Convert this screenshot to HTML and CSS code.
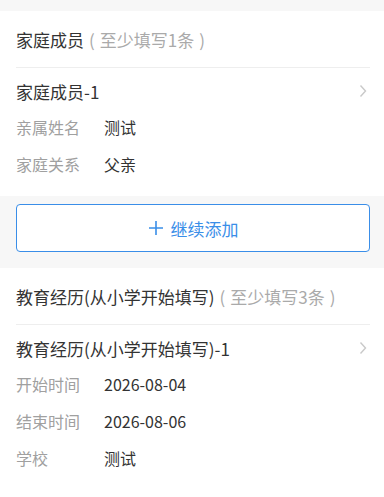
FILE: index.html
```html
<!DOCTYPE html>
<html lang="zh-CN">
<head>
    <meta charset="UTF-8">
    <meta name="viewport" content="width=device-width, initial-scale=1.0">
    <title>信息填写</title>
    <link rel="stylesheet" href="styles.css">
</head>
<body>

    <div class="band-top"></div>

    <div class="section">
        <div class="section-head">家庭成员<span class="hint"><span class="paren">(</span>至少填写1条<span class="paren">)</span></span></div>
        <div class="item">
            <div class="item-title">
                <span>家庭成员-1</span>
                <svg class="chevron" width="8" height="14" viewBox="0 0 8 14"><path d="M1.5 1.5 L6.5 7 L1.5 12.5" fill="none" stroke="#c9c9c9" stroke-width="1.4"/></svg>
            </div>
            <div class="row"><span class="label">亲属姓名</span><span class="value">测试</span></div>
            <div class="row"><span class="label">家庭关系</span><span class="value">父亲</span></div>
        </div>
    </div>

    <div class="band">
        <button class="add-btn">
            <svg width="16" height="16" viewBox="0 0 16 16"><path d="M8 1 V15 M1 8 H15" stroke="#3a8ee8" stroke-width="1.6"/></svg>
            <span>继续添加</span>
        </button>
    </div>

    <div class="section">
        <div class="section-head">教育经历(从小学开始填写)<span class="hint"><span class="paren">(</span>至少填写3条<span class="paren">)</span></span></div>
        <div class="item">
            <div class="item-title">
                <span>教育经历(从小学开始填写)-1</span>
                <svg class="chevron" width="8" height="14" viewBox="0 0 8 14"><path d="M1.5 1.5 L6.5 7 L1.5 12.5" fill="none" stroke="#c9c9c9" stroke-width="1.4"/></svg>
            </div>
            <div class="row"><span class="label">开始时间</span><span class="value">2026-08-04</span></div>
            <div class="row"><span class="label">结束时间</span><span class="value">2026-08-06</span></div>
            <div class="row"><span class="label">学校</span><span class="value">测试</span></div>
        </div>
    </div>

</body>
</html>
```

FILE: styles.css
```css
body {
    margin: 0;
    padding: 0;
    background-color: #fff;
    color: #333;
    font-family: "Noto Sans CJK SC", "Noto Sans", sans-serif;
    font-size: 16px;
}
.band-top {
    height: 11px;
    background-color: #f7f7f7;
}
.section {
    padding: 0 14px 0 16px;
}
.section-head {
    height: 56px;
    display: flex;
    align-items: center;
    border-bottom: 1px solid #eeeeee;
    color: #333;
    font-size: 17px;
}
.hint {
    color: #aaa;
    margin-left: 5px;
}
.paren {
    margin: 0 5px;
}
.hint .paren:first-child {
    margin-left: 0;
}
.item {
    padding-bottom: 19px;
}
.item-title {
    height: 46px;
    display: flex;
    align-items: center;
    justify-content: space-between;
    font-size: 17px;
}
.chevron {
    margin-right: 3px;
}
.row {
    display: flex;
    align-items: center;
    height: 26px;
    margin-bottom: 11px;
}
.row:last-child {
    margin-bottom: 0;
}
.label {
    width: 88px;
    color: #a0a0a0;
}
.value {
    color: #333;
}
.band {
    background-color: #f7f7f7;
    padding: 8px 14px 16px 16px;
}
.add-btn {
    width: 100%;
    height: 48px;
    display: flex;
    align-items: center;
    justify-content: center;
    gap: 7px;
    background-color: #fff;
    border: 1px solid #3a8ee8;
    border-radius: 4px;
    color: #3a8ee8;
    font-family: inherit;
    font-size: 17px;
    cursor: pointer;
}
```
